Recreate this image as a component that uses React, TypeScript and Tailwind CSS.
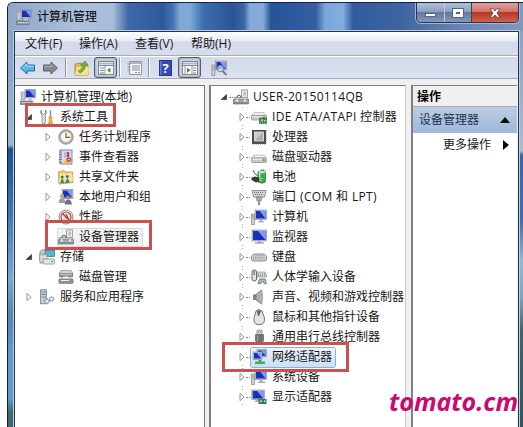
import React from 'react';

type G = React.ReactNode;

const Svg = ({ children, cls = 'w-4 h-4' }: { children: G; cls?: string }) => (
  <svg viewBox="0 0 16 16" className={`${cls} shrink-0`}>{children}</svg>
);

const Screen = ({ x, y, w, h }: { x: number; y: number; w: number; h: number }) => (
  <g>
    <rect x={x} y={y} width={w} height={h} fill="#b9c3d6" stroke="#7d879c" strokeWidth=".6" />
    <rect x={x + 1} y={y + 1} width={w - 2} height={h - 2} fill="#1c2fb8" />
    <path d={`M${x + w - 1} ${y + 1}V${y + h - 1}L${x + w / 2.4} ${y + 1}Z`} fill="#7f9df0" />
  </g>
);

const Disk = ({ y = 5 }: { y?: number }) => (
  <g>
    <path d={`M3 ${y}H13L15.5 ${y + 3}H.5Z`} fill="#eceeef" stroke="#a2a6aa" strokeWidth=".6" />
    <rect x=".5" y={y + 3} width="15" height="4.5" rx="1.3" fill="#c4c8cc" stroke="#83888d" strokeWidth=".7" />
    <path d={`M2 ${y + 4.2}H11`} stroke="#f4f5f6" />
    <rect x="11.8" y={y + 4.4} width="2" height="1.6" fill="#3f9d4d" />
  </g>
);

const Toolbox = () => (
  <Svg>
    <path d="M8.5 8V.8H14.5V8" fill="#e4ece6" stroke="#8a938c" strokeWidth=".8" />
    <rect x="10.5" y="2.5" width="2.5" height="4" fill="#a9cdb0" />
    <path d="M3.5 8.5Q6 4 8.5 8.5" fill="none" stroke="#4f5457" strokeWidth="1.2" />
    <path d="M1.5 8.5H14.5L15.5 11H.5Z" fill="#c2c7c9" stroke="#74797b" strokeWidth=".6" />
    <rect x=".5" y="11" width="15" height="4" fill="#8b9193" stroke="#626769" strokeWidth=".6" />
    <path d="M1 12H15" stroke="#d6dadb" strokeWidth=".8" />
    <path d="M3 10.5h2v2H3zM11 10.5h2v2h-2z" fill="#f0f0ea" />
  </Svg>
);

const Tower = ({ x = 0 }: { x?: number }) => (
  <g><rect x={x + 0.4} y="5" width="3" height="10.5" fill="#cfd3d8" stroke="#7b8189" strokeWidth=".7" /><path d={`M${x + 1} 7h1.8M${x + 1} 9h1.8`} stroke="#5da15f" strokeWidth=".8" /></g>
);

const icons: Record<string, G> = {
  manage: <Svg><Screen x={5} y={.5} w={10.5} h={8.5} /><rect x="1" y="3" width="4" height="8" fill="#c3c8d0" stroke="#8e949e" strokeWidth=".6" /><path d="M8 9.5h4v2H8z" fill="#c6cbd3" /><path d="M.5 12H13V15.5H.5Z" fill="#8f959f" stroke="#5e646e" strokeWidth=".6" /><path d="M2 13.7H13" stroke="#f2f2f2" strokeDasharray="1.5 1" /></Svg>,
  tools: <Svg><path d="M2.5 1V4L4.5 5.2L6.5 4V1Q9 3.3 6.2 6V14Q4.5 16.5 3 14V6Q0 3.5 2.5 1Z" fill="#e5e5e5" stroke="#85888b" strokeWidth=".9" /><path d="M11.5 1V8" stroke="#8d9195" strokeWidth="1.4" /><path d="M9.8 8H13.2L12.6 10L13.4 15H9.6L10.4 10Z" fill="#efbd32" stroke="#b98419" strokeWidth=".6" /></Svg>,
  clock: <Svg><circle cx="8" cy="8" r="7.2" fill="#b4b6b8" stroke="#7c7f82" strokeWidth=".8" /><circle cx="8" cy="8" r="5.4" fill="#fcf5df" stroke="#a49d8a" strokeWidth=".5" /><path d="M8 4V8.4H12" fill="none" stroke="#66615a" strokeWidth="1.1" /></Svg>,
  event: <Svg><rect x="2" y="1" width="12" height="14" fill="#d6dcf0" stroke="#616a85" strokeWidth=".8" /><path d="M1 3h3M1 5.5h3M1 8h3M1 10.5h3M1 13h3" stroke="#6d7489" /><path d="M6 4H12M6 6H12M6 8H12" stroke="#8190bd" strokeWidth=".8" /><path d="M9 3h2v5H9z" fill="#ce4038" /><path d="M5 14.5L7.5 10L10.5 14.5Z" fill="#f2c72e" /><circle cx="10.8" cy="10.8" r="2.4" fill="#cf3630" /><path d="M9.8 10.8h2" stroke="#fff" /></Svg>,
  share: <Svg><path d="M.5 3L6 1.5L7 3H14.5L15 13.5L1 15Z" fill="#efd071" stroke="#b68e37" strokeWidth=".8" /><path d="M2 5L14 4L15 12L1 14Z" fill="#f8e49b" /><circle cx="4.2" cy="8" r="1.5" fill="#377e4c" /><path d="M2 14L4.2 9L6.5 14Z" fill="#36965a" /><circle cx="9.3" cy="7.5" r="1.5" fill="#3b6997" /><path d="M7 14L9.3 9L12 13.5Z" fill="#3b76b8" /></Svg>,
  users: <Svg><Screen x={4} y={.5} w={11} h={9} /><circle cx="4" cy="7" r="2.2" fill="#d6a465" /><path d="M.8 14Q.5 9.2 4 9.2T7.2 14Z" fill="#8aa3b5" /><circle cx="10" cy="8.5" r="2" fill="#bb8552" /><path d="M6.8 15.5Q6.8 10.5 10 10.5T14 15.5Z" fill="#7b6a9a" /></Svg>,
  perf: <Svg><circle cx="8" cy="8" r="7" fill="#f6f3f1" stroke="#888583" /><path d="M5 6L8 4L11 10L7 12Z" fill="#d5d5d0" /><circle cx="8" cy="8" r="5" fill="none" stroke="#c63c36" strokeWidth="1.2" /><path d="M4.5 4.5L11.5 11.5M8 5L10.5 9.5" stroke="#b93330" strokeWidth="1.1" /></Svg>,
  device: <Toolbox />,
  storage: <Svg><path d="M1 2.5L3 .8H9V6H1Z" fill="#c9cdd0" stroke="#777e83" strokeWidth=".7" /><rect x="6" y="1.5" width="9.5" height="6" fill="#4abbd5" stroke="#62717a" strokeWidth=".8" /><path d="M0 5H8V14H1Z" fill="#c6cacd" stroke="#777e83" strokeWidth=".7" /><path d="M1 8H8M1 11H8" stroke="#eff1f2" /><rect x="4" y="10" width="11.5" height="5" rx="1" fill="#e2e5e7" stroke="#7b8387" strokeWidth=".7" /><path d="M12 12.5h2" stroke="#39a249" strokeWidth="1.2" /></Svg>,
  diskmgr: <Svg><path d="M3 1.5H13L15 4.5H1Z" fill="#d0d1d2" stroke="#77797b" strokeWidth=".6" /><path d="M1 4.5H15V8H1Z" fill="#7f8183" /><path d="M2 5.8H14" stroke="#dadbdc" /><path d="M4 8Q8 6 12 8L14 10.5H2Z" fill="#eee" stroke="#8a8b8d" strokeWidth=".7" /><rect x=".8" y="10" width="14.4" height="4.5" rx="1" fill="#8e9092" stroke="#666" strokeWidth=".5" /><path d="M3 11.5H11" stroke="#eee" /></Svg>,
  service: <Svg><rect x="1.5" y=".8" width="6" height="14" fill="#c5cdd4" stroke="#747e88" strokeWidth=".8" /><path d="M2.5 3H7M2.5 5.5H7M2.5 8H7" stroke="#788694" /><circle cx="8" cy="12.3" r="2.2" fill="#e0edf6" stroke="#7192b1" strokeWidth="1.5" strokeDasharray="1.2 .6" /><circle cx="12.6" cy="10" r="2" fill="#e0edf6" stroke="#7192b1" strokeWidth="1.3" strokeDasharray="1.1 .5" /></Svg>,
  ide: <Svg><Disk y={3.5} /><rect x="8.5" y="9" width="7" height="5.8" fill="#3c8857" stroke="#276842" strokeWidth=".5" /><path d="M10 10.5h2v1.5h-2zM13 11h1.5v1h-1.5z" fill="#c9e6bd" /><path d="M9 14H15" stroke="#bfd2a9" strokeDasharray="1 1" /></Svg>,
  cpu: <Svg><rect x="1" y="1" width="14" height="14" fill="#484a4c" /><path d="M1 15.2H15M15.2 1V15" stroke="#b39a78" strokeDasharray="1 1" /><rect x="3.5" y="3" width="9" height="9" fill="#c7c9cb" stroke="#eee" strokeWidth=".8" /><path d="M4 11.5L12 3.5V11.5Z" fill="#aeb0b4" /></Svg>,
  disk: <Svg><Disk y={6} /></Svg>,
  battery: <Svg><path d="M7 2.2H10V1H13V2.2H14.5V13Q11 15.5 7 13Z" fill="#37a950" stroke="#237637" strokeWidth=".7" /><path d="M8.7 4V12" stroke="#b3f0b4" strokeWidth="1.5" /><ellipse cx="11" cy="3" rx="3.8" ry="1.3" fill="#c7dcc8" /><path d="M2 1Q3 5 7 7" stroke="#4d544e" fill="none" /><path d="M.5 8.5L4 7.5L8.5 8.5V12.5L5 13.5L.5 11Z" fill="#383b38" /><path d="M8.5 9.5H12M8 11.8H11" stroke="#d8b95a" /></Svg>,
  port: <Svg><path d="M1 1.5H15L13.5 8H2.5Z" fill="#cfd2d4" stroke="#7d8184" strokeWidth=".8" /><path d="M3 3.5H13M4 5.5H12" stroke="#74787b" strokeDasharray="1 1" /><path d="M5 8H11L10 12H6Z" fill="#a8acae" stroke="#777" strokeWidth=".6" /><path d="M8 12V16" stroke="#8d9194" strokeWidth="2" /></Svg>,
  computer: <Svg><Tower /><Screen x={4} y={1} w={11.5} h={9.5} /><path d="M9 10.5h2v1.7h2v1.3H7v-1.3h2z" fill="#a2a9b2" /></Svg>,
  monitor: <Svg><Screen x={1} y={1} w={14.5} h={11} /><path d="M7 12h3v1.2h3v1.5H4v-1.5h3z" fill="#a4abb3" /></Svg>,
  keyboard: <Svg><path d="M3 5H13L15.5 7V11Q14 12 12.5 12H3Q1 12 .5 11V7Z" fill="#d6d8da" stroke="#75787a" strokeWidth=".8" /><path d="M3 6.7H13M2 8.3H14M2 10H14" stroke="#8b8f92" strokeDasharray="1.1 .8" /></Svg>,
  hid: <Svg><rect x="1" y="1" width="4.5" height="11" rx="2" fill="#e2e3e4" stroke="#606568" /><path d="M3.2 2V6" stroke="#555" /><path d="M6 3H14L15.5 6V8H6Z" fill="#d8dadc" stroke="#7c8082" strokeWidth=".6" /><path d="M7 5H14M7 6.8H14" stroke="#777" strokeDasharray="1 1" /><path d="M7 14.5L8.5 10H14L15.3 14.5L13.5 14.8L11.5 12.5L9 14.8Z" fill="#a4bbc0" stroke="#60777d" strokeWidth=".9" /></Svg>,
  sound: <Svg><path d="M2 5.5H5V11H2Z" fill="#81868a" /><path d="M5 5.5L10.5 1V15L5 11Z" fill="#adb1b4" stroke="#6d7175" strokeWidth=".8" /><path d="M10.5 1Q13 8 10.5 15" fill="#d8dbdd" stroke="#8b8f92" strokeWidth=".7" /></Svg>,
  mouse: <Svg><path d="M5 2Q8 -1 11 2L13.5 9Q14 15.5 9 15.5H7Q2.5 15.5 3 9Z" fill="#e3e4e5" stroke="#747679" strokeWidth="1" /><path d="M6 1.5L7.5 7L10 1.5" fill="#67696c" stroke="#55575a" strokeWidth=".7" /></Svg>,
  usb: <Svg><path d="M6 1H11V6H6Z" fill="#d5d6d8" stroke="#85888b" strokeWidth=".7" /><path d="M7.2 2.5h.9v1.5h-.9zM9.2 2.5h.8v1.5h-.8z" fill="#777" /><path d="M4.5 5.5H12.5V12L10.5 14H6.5L4.5 12Z" fill="#707376" stroke="#515457" strokeWidth=".6" /><path d="M6.5 6.5V12" stroke="#a5a8ab" /></Svg>,
  network: <Svg><Screen x={6} y={.5} w={9.5} h={7.5} /><Screen x={2} y={3} w={9} h={7.5} /><path d="M7.5 10.5h3v2H14v2.5H4v-2.500h3.5z" fill="#3aa665" stroke="#8ccca2" strokeWidth=".5" /></Svg>,
  system: <Svg><Tower /><Screen x={4} y={1} w={11.5} h={9.5} /><path d="M9 10.5h2v2h3v1.5H7v-1.5h2z" fill="#a2a9b2" /></Svg>,
  display: <Svg><Screen x={.8} y={1} w={12.5} h={9.5} /><path d="M5 11h4v2H3z" fill="#b1b6bc" /><rect x="7.5" y="10" width="8" height="5" fill="#397c4e" /><path d="M9 11.5h2v1.5H9zM13 11.5h1.5v1.5H13z" fill="#d9e7ce" /></Svg>,
};

const Arrow = ({ open }: { open?: boolean }) => (
  <svg viewBox="0 0 8 8" className="w-2 h-2 shrink-0">
    {open ? <path d="M6.5 1.5V6.5H1.2Z" fill="#404040" stroke="#222" strokeWidth=".6" /> : <path d="M2 .3L6 4L2 7.7Z" fill="#fff" stroke="#8c8c8c" strokeWidth=".9" />}
  </svg>
);

const leftRows: [string, string, string, string?][] = [
  ['manage', '计算机管理(本地)', 'pl-[5px]'],
  ['tools', '系统工具', 'pl-[10px]', 'open'],
  ['clock', '任务计划程序', 'pl-[29px]', 'closed'],
  ['event', '事件查看器', 'pl-[29px]', 'closed'],
  ['share', '共享文件夹', 'pl-[29px]', 'closed'],
  ['users', '本地用户和组', 'pl-[29px]', 'closed'],
  ['perf', '性能', 'pl-[29px]', 'closed'],
  ['device', '设备管理器', 'pl-[43px]', 'selected'],
  ['storage', '存储', 'pl-[10px]', 'open'],
  ['diskmgr', '磁盘管理', 'pl-[43px]'],
  ['service', '服务和应用程序', 'pl-[10px]', 'closed'],
];

const devices: [string, string][] = [
  ['ide', 'IDE ATA/ATAPI 控制器'], ['cpu', '处理器'], ['disk', '磁盘驱动器'], ['battery', '电池'],
  ['port', '端口 (COM 和 LPT)'], ['computer', '计算机'], ['monitor', '监视器'], ['keyboard', '键盘'],
  ['hid', '人体学输入设备'], ['sound', '声音、视频和游戏控制器'], ['mouse', '鼠标和其他指针设备'],
  ['usb', '通用串行总线控制器'], ['network', '网络适配器'], ['system', '系统设备'], ['display', '显示适配器'],
];

const Sep = () => <i className="w-px h-[19px] bg-[#8b93a8] border-r border-white box-content shrink-0" />;

const Pane = ({ dir }: { dir: 'l' | 'r' }) => (
  <span className="w-[23px] h-[21px] rounded-[3px] border border-[#555c69] bg-[#cbd0dc] shadow-[inset_0_0_2px_#777] flex items-center justify-center">
    <Svg><rect x=".5" y="1.5" width="15" height="13" fill="#fff" stroke="#7e8797" /><path d="M1 3.5H15" stroke="#aab7cb" strokeWidth="2" /><path d="M1 5.5H15" stroke="#7e8797" />
      {dir === 'l' ? <><path d="M2 8H6M2 10.5H6M2 13H6" stroke="#7187aa" /><path d="M7 6V14" stroke="#8d96a5" /><path d="M12.500 7.500V13L9 10.200Z" fill="#3c9a34" /></> : <><path d="M11 8H14M11 10.5H14M11 13H14" stroke="#7187aa" /><path d="M10 6V14M3 6V14" stroke="#8d96a5" /><path d="M5 7.500V13L8.500 10.200Z" fill="#3c9a34" /></>}</Svg>
  </span>
);

export default function App() {
  return (
    <div className="relative w-[523px] h-[427px] overflow-hidden bg-white pl-[7px] pt-[2px] text-[12px] leading-[20px] text-[#171717] whitespace-nowrap [font-family:'Open_Sans','Noto_Sans_CJK_SC',sans-serif]">
      <div className="w-[516px] h-[425px] flex flex-col border-l border-t border-[#14213e] rounded-tl-[6px] overflow-hidden bg-[linear-gradient(#879fbe_0px,#8aa5c8_60px,#9bb5d2_142px,#1d4f99_146px,#3e78b5_210px,#79a9d5_275px,#5b83b0_310px,#5e9ad0_350px,#5b9bd0_395px,#45666c_410px)]">
        <header className="h-[28px] shrink-0 flex justify-between bg-[linear-gradient(90deg,#91a7c7_0,#a9bfda_70px,#a7bdd9_105px,#3f69a7_120px,#30599c_155px,#4574b2_165px,#7fa9d5_172px,#7fa9d5_182px,#3d6eb0_195px,#2b5495_225px,#3b65a5_236px,#84acd6_242px,#84acd6_255px,#275397_263px,#365fa2_308px,#7aa6d8_317px,#83aede_335px,#315b9e_345px,#3c64a1_390px,#6985b3_455px,#8199bd_516px)]">
          <div className="flex items-center pl-[8px] gap-[5px] text-black">
            {icons.manage}<span className="pb-px">计算机管理</span>
          </div>
          <div className="w-[103px] h-[20px] mr-[4px] flex border border-t-0 border-[#243452] rounded-b-[5px] overflow-hidden shadow-[0_0_0_1px_#a5b7d2]">
            <span className="w-[28px] bg-[linear-gradient(#b2c1d8_0,#8b9dbe_48%,#62789f_50%,#8499ba)] border-r border-[#c0cde0] flex items-center justify-center"><i className="w-[11px] h-[4px] bg-white border border-[#586580] mt-[4px]" /></span>
            <span className="w-[27px] bg-[linear-gradient(#b2c1d8_0,#8b9dbe_48%,#62789f_50%,#8499ba)] border-r border-[#34435f] flex items-center justify-center"><i className="w-[10px] h-[8px] border-[3px] border-white bg-[#4c607e] outline outline-[#596680]" /></span>
            <span className="flex-1 bg-[linear-gradient(#dfa09a_0,#cf7169_48%,#b83426_50%,#cc6548)] flex items-center justify-center"><svg viewBox="0 0 12 10" className="w-3 h-[10px]"><path d="M1 .8H4.2L6 3L7.8.8H11L8 5L11 9.2H7.8L6 7L4.2 9.2H1L4 5Z" fill="#fff" stroke="#633c42" strokeWidth=".8" /></svg></span>
          </div>
        </header>
        <div className="flex-1 flex bg-[linear-gradient(#8aa2c6_0,#a9bbd3_120px,#3a66aa_124px,#416fae_190px,#8fb8dc_230px,#7ba6c8_265px,#41636e_300px,#2f5660_397px)] bg-[size:6px_100%] bg-right bg-no-repeat">
          <div className="ml-[6px] w-[505px] flex flex-col border border-b-0 border-[#25344f] bg-[#f0f0f0] shadow-[0_0_0_1px_#bacce2]">
            <nav className="h-[24px] shrink-0 flex pl-[10px] gap-[16px] leading-[24px] border-b border-[#a8adbe] bg-[linear-gradient(#fff_0,#e7ebf6_9px,#d5daeb_10px,#d8ddee)]">
              <span className="w-[38px]">文件(F)</span><span className="w-[40px]">操作(A)</span><span className="w-[40px]">查看(V)</span><span>帮助(H)</span>
            </nav>
            <div className="h-[23px] shrink-0 flex items-center pl-[4px] border-t border-b border-t-white border-b-[#a7aabb] bg-[linear-gradient(#d5daeb,#dce1f1)]">
              <Svg cls="w-[17px] h-4"><path d="M1 8L7.5 2V5H15V11H7.5V14Z" fill="#51b7e7" stroke="#286b9f" /><path d="M3 7.8L7 4V6.2H14" fill="none" stroke="#a5e1fa" /></Svg>
              <Svg cls="w-[17px] h-4 ml-[6px]"><path d="M15 8L8.500 2V5H1V11H8.500V14Z" fill="#878b91" stroke="#5c6066" /><path d="M2 6.5H9V4.5" fill="none" stroke="#b4b7bb" /></Svg>
              <span className="ml-[6px] mr-[7px] flex"><Sep /></span>
              <Svg><path d="M1 4L7 3L8 5H14V15H1Z" fill="#e9ba50" stroke="#9f782a" strokeWidth=".8" /><path d="M1 15L3 7H15L14 15Z" fill="#fce08b" /><path d="M4 11Q8 10 9 5H6.500L11 1L14 5H11.500Q11 11 6 13Z" fill="#6fb844" stroke="#44802a" strokeWidth=".6" /></Svg>
              <span className="ml-[4px] flex"><Pane dir="l" /></span>
              <span className="ml-[2px] mr-[6px] flex"><Sep /></span>
              <Svg><rect x="2.500" y="1.500" width="12" height="13" fill="#f8f8f8" stroke="#8f98a8" /><path d="M3 3H14" stroke="#a8b4c9" strokeWidth="2" /><path d="M.5 4h3M.5 7h3M.5 10h3M5 6h8M5 8h8M5 10h8M8 12.500h2M11 12.500h2" stroke="#8a919e" /></Svg>
              <span className="ml-[5px] mr-[9px] flex"><Sep /></span>
              <span className="w-[13px] h-[16px] bg-[linear-gradient(90deg,#7288d6,#304bb1_25%)] border border-[#273c85] text-white font-bold text-[13px] leading-[14px] text-center">?</span>
              <span className="ml-[6px] flex"><Pane dir="r" /></span>
              <Svg cls="w-[17px] h-4 ml-[10px]"><Tower /><Screen x={4} y={1} w={11} h={9} /><circle cx="9" cy="8.500" r="3.200" fill="#d5e5f5" fillOpacity=".7" stroke="#717d8c" /><path d="M11 11L15 15" stroke="#777c83" strokeWidth="2" /></Svg>
            </div>
            <main className="flex-1 flex pt-[6px]">
              <section className="w-[190px] border-r border-t border-[#777] bg-white pt-px">
                {leftRows.map(([icon, label, pad, state]) => (
                  <div key={label} className={`h-5 flex items-center ${pad}`}>
                    {(state === 'open' || state === 'closed') && <Arrow open={state === 'open'} />}
                    <div className={`flex items-center gap-[5px] h-[19px] ${state === 'selected' ? 'bg-[#f2f2f2] border border-[#d7d7d7] rounded-[2px] pr-[3px] -ml-px' : state ? 'ml-[6px]' : ''}`}>{icons[icon]}<span>{label}</span></div>
                  </div>
                ))}
              </section>
              <section className="ml-[4px] w-[197px] border-l-2 border-t border-r border-[#808080] border-r-[#c9c9c9] bg-white pt-px">
                <div className="h-5 flex items-center pl-[9px]"><Arrow open /><i className="w-[4px] border-t border-dotted border-[#888] ml-px" /><Toolbox /><span className="ml-[4px] tracking-[.33px]">USER-20150114QB</span></div>
                <div className="bg-[linear-gradient(#aaa_1px,transparent_1px)] bg-[size:1px_3px] bg-[position:31px_0] bg-repeat-y">
                  {devices.map(([icon, label]) => (
                    <div key={label} className="h-5 flex items-center pl-[27px]">
                      <span className="bg-white py-[3px] flex"><Arrow /></span><i className="w-[4px] border-t border-dotted border-[#888] mr-px" />
                      <div className={`flex items-center gap-[5px] h-[19px] ${icon === 'network' ? 'rounded-[2px] bg-[linear-gradient(#edf5fd,#cadff5)] shadow-[0_0_0_1px_#8eb0d4] pr-[3px]' : ''}`}>{icons[icon]}<span className={icon === 'ide' || icon === 'port' ? 'tracking-[.33px]' : ''}>{label}</span></div>
                    </div>
                  ))}
                </div>
              </section>
              <section className="ml-[5px] w-[106px] border-l-2 border-t border-[#808080] bg-white">
                <div className="h-[21px] pl-[4px] leading-[22px] font-bold text-black bg-[#f0f0f0] border-b border-[#aaa]">操作</div>
                <div className="h-[26px] pl-[6px] pr-[7px] flex items-center justify-between bg-[linear-gradient(#bccde2,#9db9da)] text-[#22344b]"><span>设备管理器</span><svg viewBox="0 0 10 6" className="w-[10px] h-[6px]"><path d="M0 6L5 0L10 6Z" fill="#050505" /></svg></div>
                <div className="h-[23px] pl-[30px] pr-[7px] flex items-center justify-between"><span>更多操作</span><svg viewBox="0 0 6 10" className="w-[6px] h-[10px] mr-px"><path d="M0 0L6 5L0 10Z" fill="#050505" /></svg></div>
              </section>
            </main>
          </div>
        </div>
      </div>
      <div className="absolute left-[25px] top-[103px] w-[91px] h-[24px] border-[3px] border-[#c95150]" />
      <div className="absolute left-[45px] top-[220px] w-[107px] h-[30px] border-[3px] border-[#c95150]" />
      <div className="absolute left-[222px] top-[342px] w-[127px] h-[30px] border-[3px] border-[#c95150]" />
      <div className="absolute left-[389px] top-[385px] text-[25px] leading-[32px] italic font-bold text-[#c90a70] [font-family:'Open_Sans',sans-serif]">tomato.cm</div>
    </div>
  );
}
